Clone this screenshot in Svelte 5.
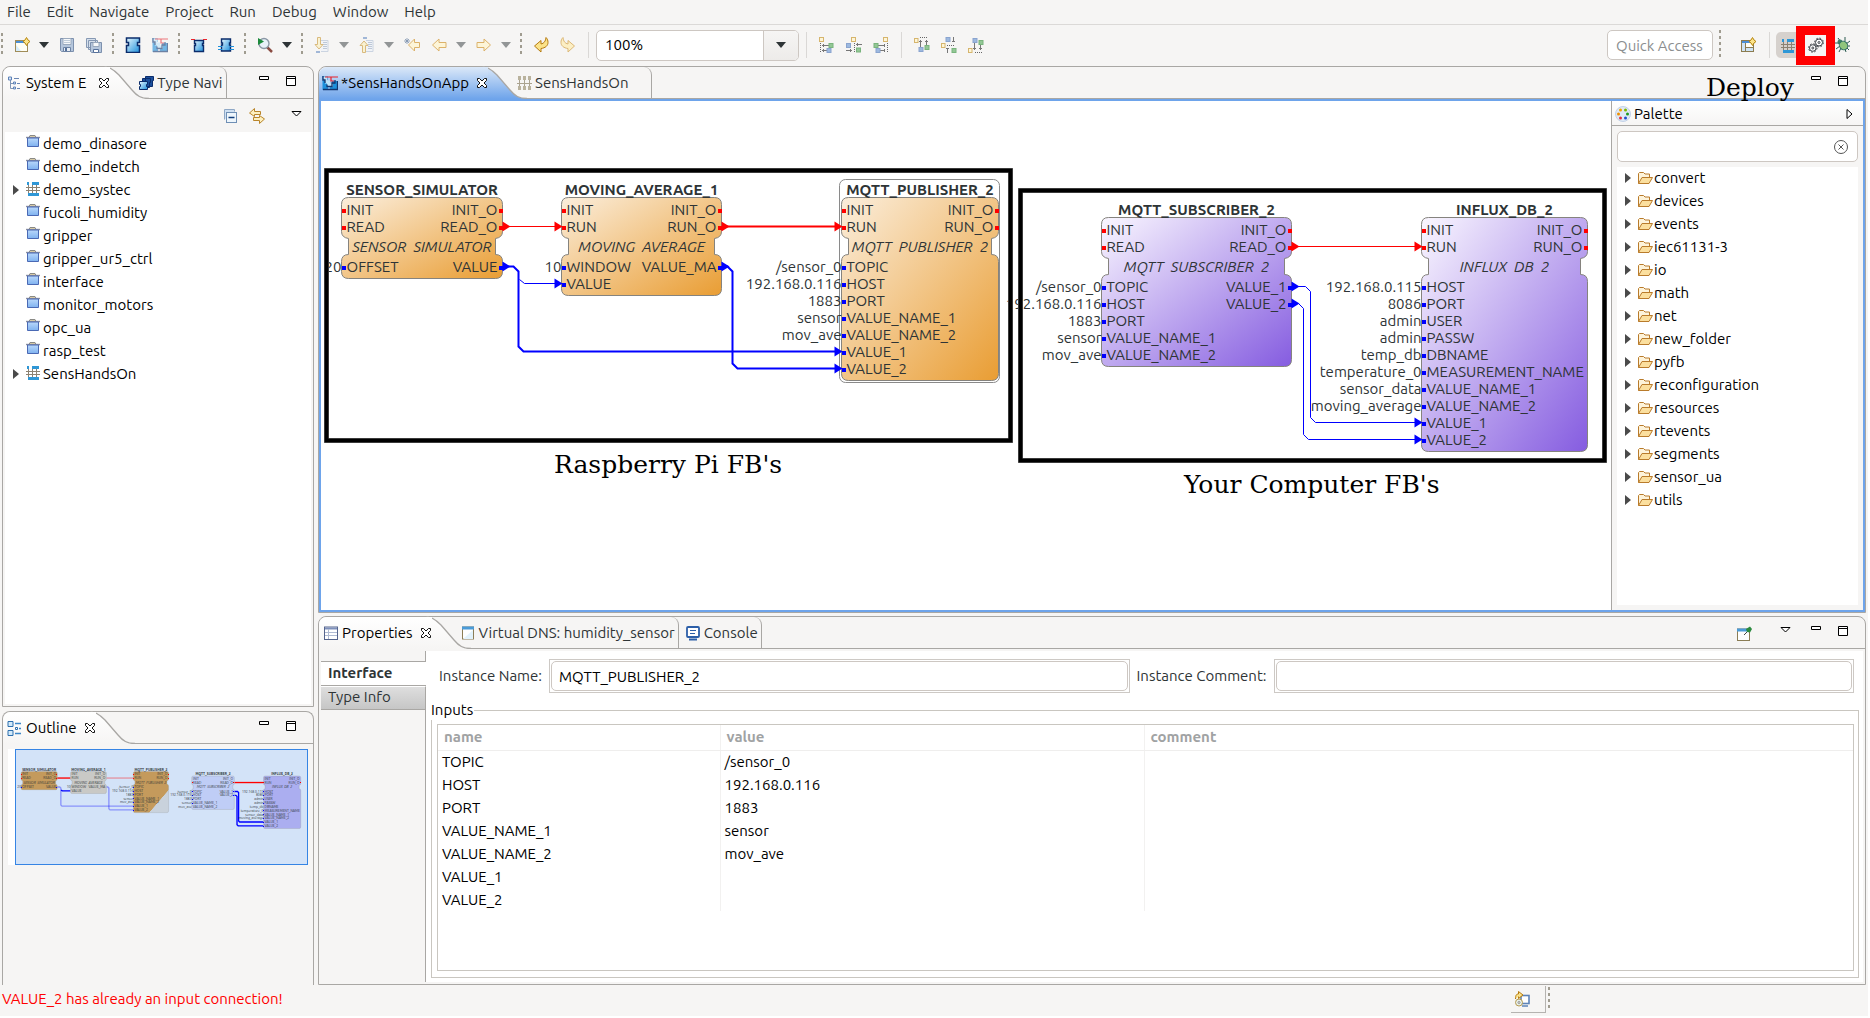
<script>
  const menus = ['File', 'Edit', 'Navigate', 'Project', 'Run', 'Debug', 'Window', 'Help'];

  const tools = [
    ['dots', 'lead'],
    ['new', 'New'], ['caret', 'New options'], ['save', 'Save'], ['saveall', 'Save All'],
    ['dots'],
    ['fb', 'Function Block'], ['fbn', 'Application'],
    ['dots'],
    ['fbred', 'Event interface'], ['fbblue', 'Data interface'],
    ['dots'],
    ['search', 'Search'], ['caret', 'Search options'],
    ['dots'],
    ['nextann', 'Next Annotation'], ['caretoff', 'Next options'],
    ['prevann', 'Previous Annotation'], ['caretoff', 'Previous options'],
    ['lastedit', 'Last Edit Location'], ['back', 'Back'], ['caretoff', 'Back options'],
    ['forward', 'Forward'], ['caretoff', 'Forward options'],
    ['dots'],
    ['undo', 'Undo'], ['redo', 'Redo'],
    ['sep']
  ];
  const aligns = [
    ['sep'], ['alignleft', 'Align Left'], ['aligncenter', 'Align Center'], ['alignright', 'Align Right'],
    ['sep'], ['aligntop', 'Align Top'], ['alignmiddle', 'Align Middle'], ['alignbottom', 'Align Bottom']
  ];

  const projects = [
    ['demo_dinasore', 'project'], ['demo_indetch', 'project'], ['demo_systec', 'system'],
    ['fucoli_humidity', 'project'], ['gripper', 'project'], ['gripper_ur5_ctrl', 'project'],
    ['interface', 'project'], ['monitor_motors', 'project'], ['opc_ua', 'project'],
    ['rasp_test', 'project'], ['SensHandsOn', 'system']
  ];

  const palette = ['convert', 'devices', 'events', 'iec61131-3', 'io', 'math', 'net', 'new_folder',
    'pyfb', 'reconfiguration', 'resources', 'rtevents', 'segments', 'sensor_ua', 'utils'];

  const inputs = [
    ['TOPIC', '/sensor_0'], ['HOST', '192.168.0.116'], ['PORT', '1883'],
    ['VALUE_NAME_1', 'sensor'], ['VALUE_NAME_2', 'mov_ave'], ['VALUE_1', ''], ['VALUE_2', '']
  ];

  // Function blocks, in canvas coordinates
  const blocks = [
    { name: 'SENSOR_SIMULATOR', type: ['SENSOR', 'SIMULATOR'], x: 20, y: 96, w: 161, h: 81, color: 'orange', mini: '#c49a5c',
      ein: ['INIT', 'READ'], eout: ['INIT_O', 'READ_O'], din: [['OFFSET', '20']], dout: ['VALUE'] },
    { name: 'MOVING_AVERAGE_1', type: ['MOVING', 'AVERAGE'], x: 240, y: 96, w: 160, h: 98, color: 'orange', mini: '#c9c9c6',
      ein: ['INIT', 'RUN'], eout: ['INIT_O', 'RUN_O'], din: [['WINDOW', '10'], ['VALUE', '']], dout: ['VALUE_MA'] },
    { name: 'MQTT_PUBLISHER_2', type: ['MQTT', 'PUBLISHER', '2'], x: 520, y: 96, w: 157, h: 183, color: 'orange', mini: 'url(#fill-split)', selected: true,
      ein: ['INIT', 'RUN'], eout: ['INIT_O', 'RUN_O'],
      din: [['TOPIC', '/sensor_0'], ['HOST', '192.168.0.116'], ['PORT', '1883'], ['VALUE_NAME_1', 'sensor'], ['VALUE_NAME_2', 'mov_ave'], ['VALUE_1', ''], ['VALUE_2', '']], dout: [] },
    { name: 'MQTT_SUBSCRIBER_2', type: ['MQTT', 'SUBSCRIBER', '2'], x: 780, y: 116, w: 190, h: 149, color: 'purple', mini: '#bfcdf6',
      ein: ['INIT', 'READ'], eout: ['INIT_O', 'READ_O'],
      din: [['TOPIC', '/sensor_0'], ['HOST', '192.168.0.116'], ['PORT', '1883'], ['VALUE_NAME_1', 'sensor'], ['VALUE_NAME_2', 'mov_ave']], dout: ['VALUE_1', 'VALUE_2'] },
    { name: 'INFLUX_DB_2', type: ['INFLUX', 'DB', '2'], x: 1100, y: 116, w: 166, h: 234, color: 'purple', mini: '#abaef0',
      ein: ['INIT', 'RUN'], eout: ['INIT_O', 'RUN_O'],
      din: [['HOST', '192.168.0.115'], ['PORT', '8086'], ['USER', 'admin'], ['PASSW', 'admin'], ['DBNAME', 'temp_db'], ['MEASUREMENT_NAME', 'temperature_0'], ['VALUE_NAME_1', 'sensor_data'], ['VALUE_NAME_2', 'moving_average'], ['VALUE_1', ''], ['VALUE_2', '']], dout: [] }
  ];

  const wires = [
    { d: 'M181 125H240', c: 'red', w: 1 },
    { d: 'M400 125H520', c: 'red', w: 2, soft: true },
    { d: 'M181 165H192L197 170V245L202 250H520', c: 'blue', w: 2, soft: true },
    { d: 'M198 178L203 182H240', c: 'blue', w: 1 },
    { d: 'M400 165H406L411 170V262L416 267H520', c: 'blue', w: 2, soft: true },
    { d: 'M970 145H1100', c: 'red', w: 1 },
    { d: 'M970 185H984L989 190V316L994 321H1100', c: 'blue', w: 1 },
    { d: 'M970 202H977L982 207V333L987 338H1100', c: 'blue', w: 1 }
  ];
  const arrows = [
    [181, 125, 'red'], [233, 125, 'red'], [400, 125, 'red'], [513, 125, 'red'],
    [181, 165, 'blue'], [233, 182, 'blue'], [400, 165, 'blue'], [513, 250, 'blue'], [513, 267, 'blue'],
    [970, 145, 'red'], [1093, 145, 'red'], [970, 185, 'blue'], [970, 202, 'blue'], [1093, 321, 'blue'], [1093, 338, 'blue']
  ];

  function outline({ x, y, w, h }) {
    const r = x + w, b = y + h, n = 7;
    return `M${x + n} ${y}H${r - n}Q${r} ${y} ${r} ${y + n}V${y + 34}Q${r} ${y + 40} ${r - n} ${y + 41}V${y + 57}Q${r} ${y + 57} ${r} ${y + 64}V${b - n}Q${r} ${b} ${r - n} ${b}H${x + n}Q${x} ${b} ${x} ${b - n}V${y + 64}Q${x} ${y + 57} ${x + n} ${y + 57}V${y + 41}Q${x} ${y + 40} ${x} ${y + 34}V${y + n}Q${x} ${y} ${x + n} ${y}Z`;
  }
</script>

{#snippet icon(name)}
  <svg class="icon" viewBox="0 0 16 16" width="16" height="16" aria-hidden="true">
    {#if name === 'new'}
      <rect x="1.500" y="3.500" width="12" height="11" fill="#fffef4" stroke="#a08c58" />
      <path d="M2 4h11v2H2z" fill="#4b8fd6" /><path d="M2 14V8l5 6z" fill="#d7edfb" />
      <path d="M12.500 .5L14 3l2 1.500L14 6l-1.500 2.500L11 6 9 4.500 11 3z" fill="#fbe38a" stroke="#b8860b" />
    {:else if name === 'save'}
      <path d="M1.500 1.500h13v13h-12l-1-1z" fill="#b5c6dc" stroke="#7d90ad" /><path d="M4 1.500h8v6H4z" fill="#f6f8fa" stroke="#9aa9bd" /><path d="M5 3.500h6M5 5.500h6" stroke="#c0ccd9" /><path d="M4.500 10.500h7v4h-7z" fill="#e8eef5" stroke="#6c82a3" /><path d="M6 11h2v3H6z" fill="#56719b" />
    {:else if name === 'saveall'}
      <path d="M.5 1.500h9v9h-9zM2.500 3.500h9v9h-9z" fill="#d5dfeb" stroke="#8698b3" /><path d="M4.500 5.500h11v10h-10l-1-1z" fill="#b5c6dc" stroke="#7d90ad" /><path d="M7 5.500h6v4H7z" fill="#f6f8fa" stroke="#9aa9bd" /><path d="M7.500 12.500h5v3h-5z" fill="#fff" stroke="#56719b" />
    {:else if name === 'fb'}
      <path d="M1.500 1h13v4.500h-2v3h2v7h-13v-7h2v-3h-2z" fill="url(#ic-cyan)" stroke="#0b2c6b" stroke-width="1.500" />
    {:else if name === 'fbn' || name === 'app'}
      <g opacity={name === 'fbn' ? 0.6 : 1}>
        <path d="M.5 1h5v4H4v2h2v8H.5zM10 6h5.500v9H8v-3h2z" fill="#1e90dc" />
        <path d="M1 1.500h4v4h3v3h3v3H5v-3H3v-3H1z" fill="#bfe3f8" />
        <path d="M1 1v4h2v3M1 14.500h14.500V6M5 9.500v2h5V8h3V5" fill="none" stroke="#12356f" stroke-width="1.300" />
        <path d="M3 2h6v4h3M7 2h9" fill="none" stroke="#e8232b" stroke-width="1.200" />
      </g>
    {:else if name === 'fbred'}
      <path d="M3.500 3.500h9v3h-1v2h1v6h-9v-6h1v-2h-1z" fill="url(#ic-cyan)" stroke="#0b2c6b" stroke-width="1.400" /><path d="M0 2.500h4M12 2.500h4" stroke="#e8232b" stroke-width="1.200" />
    {:else if name === 'fbblue'}
      <path d="M3.500 2h9v4h-1v2h1v6h-9V8h1V6h-1z" fill="url(#ic-cyan)" stroke="#0b2c6b" stroke-width="1.400" /><path d="M0 9.500h4M12 9.500h4M0 12.500h4M12 12.500h4" stroke="#1e90dc" stroke-width="1.200" />
    {:else if name === 'search'}
      <path d="M10 10l5 5" stroke="#8a4b42" stroke-width="2.500" /><circle cx="7" cy="6.500" r="5" fill="#e8f1f8" stroke="#8b98a5" stroke-width="1.400" /><path d="M1 1l6 3.500L1 8z" fill="#1c8a3c" />
    {:else if name === 'nextann' || name === 'prevann'}
      <g opacity=".55"><path d="M7 3.500h7v11H7" fill="#eef3fa" stroke="#a9bad2" /><path d="M9 5.500h4M9 7.500h4M9 9.500h4M9 11.500h4" stroke="#8fa4c2" />
        {#if name === 'nextann'}<path d="M3.500 .5h3v7h2.500L5 12 1 7.500h2.500z" fill="#fdf0b8" stroke="#c28a1e" /><path d="M2 14h4v2H2z" fill="#5c86c0" />
        {:else}<path d="M3.500 15.500h3v-7h2.500L5 4 1 8.500h2.500z" fill="#fdf0b8" stroke="#c28a1e" /><path d="M4 0h4v2H4z" fill="#5c86c0" />{/if}</g>
    {:else if name === 'lastedit'}
      <path d="M15.500 5.500v5h-5v3.500L4.500 8l6-6v3.500z" fill="#fdf5d8" stroke="#dcb26a" /><path d="M3 1v6M0 4h6M1 2l4 4M5 2L1 6" stroke="#7f93af" stroke-width=".8" />
    {:else if name === 'back'}
      <path d="M15 5.500v5H8v3.500L1.500 8 8 2v3.500z" fill="#fdf5d8" stroke="#dcb26a" />
    {:else if name === 'forward'}
      <path d="M1 5.500v5h7v3.500L14.500 8 8 2v3.500z" fill="#fdf5d8" stroke="#dcb26a" />
    {:else if name === 'undo'}
      <path d="M13 .5c1.500 1.500 2 3 2 5 0 3-2.500 5.500-7 6v3.500L1.500 9 8 3.500V7c3-.5 4.800-3 5-6.500z" fill="#fbe38a" stroke="#b57a10" />
    {:else if name === 'redo'}
      <path d="M3 .5C1.500 2 1 3.500 1 5.500c0 3 2.500 5.500 7 6v3.500L14.500 9 8 3.500V7C5 6.500 3.200 4 3 .5z" fill="#fcefc4" stroke="#dcb877" />
    {:else if name.startsWith('align')}
      {@const v = name === 'aligntop' || name === 'alignmiddle' || name === 'alignbottom'}
      {@const o = { alignleft: [1, 10, 8], aligncenter: [6, 11, 1], alignright: [11, 1, 3], aligntop: [1, 10, 8], alignmiddle: [6, 0, 11], alignbottom: [11, 1, 3] }[name]}
      {#if v}
        <path d="M{name === 'alignbottom' ? 7 : 6} {name === 'aligntop' ? 0.5 : name === 'alignmiddle' ? 8.5 : 15.5}h8" stroke="#666" stroke-dasharray="1 1" />
        {#if name === 'aligntop'}<path d="M6.500 3v7M12.500 3v6M5 4.500h3M11 4.500h3" stroke="#777" />
        {:else if name === 'alignmiddle'}<path d="M12.500 0v5M6.500 11v5M11 4.500h3M5 11.500h3" stroke="#777" />
        {:else}<path d="M6.500 6v7M12.500 7v6M5 11.500h3M11 11.500h3" stroke="#777" />{/if}
        <rect x=".5" y={o[0] + 0.5} width="3.500" height="4" fill="#fdf5d8" stroke="#d6b56d" /><rect x="5" y={o[1] + 0.5} width="4" height="4" fill="#9db9df" stroke="#8aa4cf" /><rect x="11" y={o[2] + 0.5} width="4" height="4" fill="#93c795" stroke="#79b47d" />
      {:else}
        <path d="M{name === 'alignleft' ? 1.5 : name === 'aligncenter' ? 8.5 : 14.5} 6v9" stroke="#666" stroke-dasharray="1 1" />
        {#if name === 'alignleft'}<path d="M3 8.500h7M3 13.500h5M4.500 7v3M4.500 12v3" stroke="#777" />
        {:else if name === 'aligncenter'}<path d="M10 7.500h6M0 13.500h6M11.500 6v3M4.500 12v3" stroke="#777" />
        {:else}<path d="M5 8.500h7M7 13.500h5M11.500 7v3M11.500 12v3" stroke="#777" />{/if}
        <rect x={o[0] - 0.5} y=".5" width="4" height="4" fill="#fdf5d8" stroke="#d6b56d" />
        {#if name === 'aligncenter'}
          <rect x=".5" y="6.500" width="4" height="4" fill="#9db9df" stroke="#8aa4cf" /><rect x="10.500" y="11" width="4" height="4" fill="#93c795" stroke="#79b47d" />
        {:else}
          <rect x={o[1]} y="6.500" width="4" height="4" fill="#93c795" stroke="#79b47d" /><rect x={o[2]} y="11.500" width="4" height="4" fill="#9db9df" stroke="#8aa4cf" />
        {/if}
      {/if}
    {:else if name === 'perspective'}
      <rect x="1.500" y="3.500" width="12" height="11" fill="#fffef4" stroke="#8c7c50" /><path d="M2 4h11v2H2z" fill="#4b8fd6" /><path d="M5.500 6v9M5.500 10.500h8" stroke="#8c7c50" /><path d="M2 6h3v8H2zM6 11h7v3H6z" fill="#cfe4f5" />
      <path d="M12.500 .5L14 3l2 1.500L14 6l-1.500 2.500L11 6 9 4.500 11 3z" fill="#fbe38a" stroke="#b8860b" />
    {:else if name === 'system'}
      <path d="M1 7.500h14M1 10.500h14M3.500 5v8M7.500 5v8M11.500 5v8" stroke="#8c8272" fill="none" />
      <path d="M2 2h2v3H2zM7 2h7v3H7zM3 13h11v3H3z" fill="#2f97d6" />
    {:else if name === 'systemtab'}
      <path d="M1 8.500h15M3.500 5v7M8.500 5v7M13.500 5v7" stroke="#aaa390" fill="none" />
      <path d="M2 1h3v4H2zM7 1h3v4H7zM12 1h3v4h-3zM2 11h3v4H2zM7 11h3v4H7zM12 11h3v4h-3z" fill="#b9b29d" />
    {:else if name === 'gears'}
      <g fill="#fff" stroke="#3d4247"><circle cx="11" cy="5.500" r="3.500" stroke-width="1" /><circle cx="11" cy="5.500" r="4.400" fill="none" stroke-width="1" stroke-dasharray="1.700 1.750" /><circle cx="11" cy="5.500" r="1" /><circle cx="4.800" cy="11" r="3.300" /><circle cx="4.800" cy="11" r="4.200" fill="none" stroke-dasharray="1.600 1.700" /><circle cx="4.800" cy="11" r="1" /></g>
    {:else if name === 'bug'}
      <path d="M3 1l3 4M10 0v4M0 6h5M15 4l-4 3M15 9h-4M1 12l4-3M4 15l2-4M11 15l-1-3M14 13l-3-3" stroke="#2c5b50" /><circle cx="5" cy="5" r="2.500" fill="#3f7f6b" /><ellipse cx="8.500" cy="8.500" rx="4" ry="4.500" fill="#8fc57c" stroke="#2f6f63" transform="rotate(-40 8.500 8.500)" />
    {:else if name === 'explorer'}
      <path d="M3.500 5v8.500h3M3.500 8.500h3" fill="none" stroke="#7f95b5" /><path d="M1.500 2h3v3h-3zM6.500 7h2v2h-2zM6.500 12h2v2h-2z" fill="#d7e6f8" stroke="#5f83b8" /><path d="M7 3.500h5M10 8.500h3M10 13.500h3" stroke="#6a86b3" />
    {:else if name === 'types'}
      <path d="M7.500 1.500h8v4h-1v6h-7zM4.500 3.500h8v4h-1v5h-7z" fill="#1b4f9c" stroke="#0b2c6b" /><path d="M1.500 6.500h8v3h-1v2h1v3h-8v-3h1v-2h-1z" fill="url(#ic-cyan)" stroke="#0b2c6b" />
    {:else if name === 'collapse'}
      <path d="M2.500 11.500v-10h10v2" fill="#cfe0f2" stroke="#8fa8c6" /><rect x="4.500" y="4.500" width="10" height="10" fill="#eef6fc" stroke="#6f8fb5" /><path d="M6.500 9.500h6" stroke="#123e7c" stroke-width="1.500" />
    {:else if name === 'link'}
      <path d="M11.500 3.500v3H5.500v2L.5 5l5-4.500v3zM4.500 9.500v3h6v3l5-4.500-5-3.500v2z" fill="#fdf0c0" stroke="#b9852a" />
    {:else if name === 'project'}
      <path d="M5 1.500h5l1 2H4z" fill="#ead9a8" stroke="#8a8a86" /><path d="M1 3.500h14" stroke="#8b8fa0" stroke-width="1.400" /><path d="M2.500 4h11v8.500h-11z" fill="url(#ic-proj)" stroke="#4a69b4" />
    {:else if name === 'folder'}
      <path d="M1.500 13.500v-10l1-1h4l1.500 1.500h4.500v3" fill="#fdf3da" stroke="#b97b2b" /><path d="M1.500 13.500l3.500-6h10.500l-3.500 6z" fill="#fbdf9e" stroke="#b97b2b" />
    {:else if name === 'palette'}
      <circle cx="8" cy="8" r="7.500" fill="#dfe9f6" stroke="#c3d2e8" /><g><circle cx="5.500" cy="4" r="1.500" fill="#f0a400" /><circle cx="10.500" cy="4" r="1.500" fill="#7fb800" /><circle cx="3.500" cy="8" r="1.500" fill="#f09000" /><circle cx="12.500" cy="8" r="1.500" fill="#1f9a1f" /><circle cx="5.500" cy="12" r="1.500" fill="#e03040" /><circle cx="10.500" cy="12" r="1.500" fill="#2050d0" /></g>
    {:else if name === 'outline'}
      <path d="M1 1.500h5v5H1zM1 10.500h5v5H1z" fill="#d3eafa" stroke="#2d6fae" /><path d="M8.500 7.500h2v2h-2z" fill="#fff" stroke="#2d6fae" /><path d="M8 3.500h6M12 8.500h2M8 13.500h6" stroke="#3d87c8" stroke-width="1.300" />
    {:else if name === 'properties'}
      <rect x="1.500" y="2" width="13" height="12.500" fill="#fff" stroke="#55648c" /><path d="M2 2.500h12v2H2z" fill="#7e90bb" /><path d="M5.500 4v10M2 7.500h12M2 10.500h12" stroke="#b0bbd3" />
    {:else if name === 'window'}
      <rect x="2.500" y="2" width="11" height="12" fill="#fdfefe" stroke="#8b7d55" /><path d="M2 1.500h12v3H2z" fill="#4a9bd8" /><path d="M3 14L13 5v9z" fill="#e2f2fb" />
    {:else if name === 'console'}
      <rect x="2" y="2" width="12" height="10" rx="1" fill="#fff" stroke="#2d5fa8" stroke-width="1.800" /><path d="M5 5.500h6M5 8.500h5" stroke="#2d5fa8" /><path d="M4 14.500h8" stroke="#2d5fa8" stroke-width="2" />
    {:else if name === 'pin'}
      <rect x="1.500" y="3" width="12" height="11.500" fill="#fdfefe" stroke="#8b7d55" /><path d="M1 2.500h10v3H1z" fill="#4a9bd8" /><path d="M8 9l4-4" stroke="#444" /><path d="M10 3l4-2.500L16 3l-2 3.500-3-.5z" fill="#2b8a3e" />
    {:else if name === 'updates'}
      <rect x="7" y="4.500" width="8" height="8" fill="#fff" stroke="#5d83b8" stroke-width="1.600" /><path d="M8 15h6" stroke="#5d83b8" stroke-width="1.500" /><circle cx="5" cy="11.500" r="3.500" fill="#e6eee8" stroke="#b59a50" /><circle cx="5" cy="11.500" r="1" fill="#fff" stroke="#888" /><path d="M1.500 8c0-4 1-5 3-5V.5L9 4 4.500 7.500V5.500" fill="#fbe38a" stroke="#b57a10" />
    {/if}
  </svg>
{/snippet}

{#snippet close()}
  <button class="close" aria-label="Close"><svg class="icon" viewBox="0 0 12 12" width="12" height="12"><path d="M1.500 1.500h2L6 4l2.500-2.500h2v2L8 6l2.500 2.500v2h-2L6 8l-2.500 2.500h-2v-2L4 6 1.500 3.500z" fill="#fff" stroke="#111" /></svg></button>
{/snippet}

{#snippet winbuttons(menu)}
  <div class="winbtns">
    {#if menu}
      <button class="pin" aria-label="Pin">{@render icon('pin')}</button>
      <button class="viewmenu" aria-label="View Menu"><svg viewBox="0 0 11 11" width="11" height="11"><path d="M1 1.500h9L5.500 6z" fill="#fff" stroke="#000" /></svg></button>
    {/if}
    <button aria-label="Minimize"><svg viewBox="0 0 11 11" width="11" height="11"><path d="M.5 .5h9v3h-9z" fill="#fff" stroke="#000" /></svg></button>
    <button aria-label="Maximize"><svg viewBox="0 0 11 11" width="11" height="11"><path d="M.5 .5h9v9h-9zM.5 2.500h9" fill="#fff" stroke="#000" /></svg></button>
  </div>
{/snippet}

{#snippet curve(fill)}
  <svg class="curve" viewBox="0 0 48 33" width="48" height="33" aria-hidden="true">
    <path d="M0 0C8 .5 12 3 18 9L31 24C36 30 40 32.500 48 32.500V33H0Z" fill="url(#{fill})" />
    <path d="M0 .5C8 .5 12 3 18 9L31 24C36 30 40 32.500 48 32.500" fill="none" stroke="#a9a7a4" stroke-width="1.300" />
  </svg>
{/snippet}

{#snippet toolitem(name, label)}
  {#if name === 'dots'}
    <span class="dots" class:lead={label === 'lead'}></span>
  {:else if name === 'sep'}
    <span class="sep"></span>
  {:else if name.startsWith('caret')}
    <button class="caret" class:off={name === 'caretoff'} aria-label={label}><svg viewBox="0 0 10 6" width="10" height="6"><path d="M0 0h10L5 6z" fill="currentColor" /></svg></button>
  {:else}
    <button class="tool" aria-label={label}>{@render icon(name)}</button>
  {/if}
{/snippet}

{#snippet port(x, y, color)}
  <rect {x} y={y - 2} width="4" height="4" fill={color} shape-rendering="crispEdges" />
{/snippet}

{#snippet diagram(mini)}
  {#each wires as wire}
    <path d={wire.d} fill="none" stroke={wire.c} stroke-width={mini ? 6 : wire.w} opacity={mini && wire.soft ? 0.35 : 1} />
  {/each}
  {#each blocks as b}
    {#if b.selected && !mini}
      <rect x={b.x - 2} y={b.y - 18} width={b.w + 3} height={b.h + 20} rx="6" fill="#fff" stroke="#8a8a8a" />
    {/if}
    <path d={outline(b)} fill={mini ? b.mini : `url(#fill-${b.color})`} stroke="#85837e" />
    <text class="title" x={b.x + b.w / 2} y={b.y - 3} text-anchor="middle">{b.name}</text>
    <text class="type" x={b.x + b.w / 2} y={b.y + 54} text-anchor="middle">{b.type.join('\u00a0\u00a0')}</text>
    {#each b.ein as p, i}
      {@render port(b.x, b.y + 13 + i * 17, '#f00')}
      <text x={b.x + 5} y={b.y + 17 + i * 17}>{p}</text>
    {/each}
    {#each b.eout as p, i}
      {@render port(b.x + b.w - 4, b.y + 13 + i * 17, '#f00')}
      <text x={b.x + b.w - 5} y={b.y + 17 + i * 17} text-anchor="end">{p}</text>
    {/each}
    {#each b.din as p, i}
      {@render port(b.x, b.y + 70 + i * 17, '#00f')}
      <text x={b.x + 5} y={b.y + 74 + i * 17}>{p[0]}</text>
      <text x={b.x} y={b.y + 74 + i * 17} text-anchor="end">{p[1]}</text>
    {/each}
    {#each b.dout as p, i}
      {@render port(b.x + b.w - 4, b.y + 70 + i * 17, '#00f')}
      <text x={b.x + b.w - 5} y={b.y + 74 + i * 17} text-anchor="end">{p}</text>
    {/each}
  {/each}
  {#if !mini}
    {#each arrows as [x, y, c]}
      <path d="M{x} {y - 5}L{x + 8} {y}L{x} {y + 5}Z" fill={c} />
    {/each}
  {/if}
{/snippet}

<svg class="defs" width="0" height="0" aria-hidden="true">
  <defs>
    <linearGradient id="ic-cyan" x1="0" y1="0" x2="1" y2="1"><stop offset="0" stop-color="#e6f6fd" /><stop offset="1" stop-color="#1e90dc" /></linearGradient>
    <linearGradient id="ic-proj" x1="0" y1="0" x2="0" y2="1"><stop offset="0" stop-color="#b9d8fb" /><stop offset="1" stop-color="#7fb2f0" /></linearGradient>
    <linearGradient id="tab-plain" x1="0" y1="0" x2="0" y2="1"><stop offset="0" stop-color="#fff" /><stop offset="1" stop-color="#f6f5f4" /></linearGradient>
    <linearGradient id="tab-blue" x1="0" y1="0" x2="0" y2="1"><stop offset="0" stop-color="#dbe8f8" /><stop offset="1" stop-color="#6ea4eb" /></linearGradient>
    <linearGradient id="fill-orange" x1="0" y1="0" x2="1" y2="1"><stop offset="0" stop-color="#fbeedc" /><stop offset="1" stop-color="#e99d33" /></linearGradient>
    <linearGradient id="fill-purple" x1="0" y1="0" x2="1" y2="1"><stop offset="0" stop-color="#faf7ff" /><stop offset="1" stop-color="#855ce0" /></linearGradient>
    <linearGradient id="fill-split" x1="0" y1="0" x2="1" y2="1"><stop offset=".72" stop-color="#c49a5c" /><stop offset=".73" stop-color="#c9d2dc" /></linearGradient>
  </defs>
</svg>

<div class="ide">
  <nav class="menubar" aria-label="Main menu">
    {#each menus as m}<button>{m}</button>{/each}
  </nav>

  <div class="toolbar">
    {#each tools as [name, label]}{@render toolitem(name, label)}{/each}
    <div class="combo">
      <input value="100%" aria-label="Zoom" />
      <button aria-label="Zoom levels"><svg viewBox="0 0 10 6" width="10" height="6"><path d="M0 0h10L5 6z" fill="#2e3436" /></svg></button>
    </div>
    {#each aligns as [name, label]}{@render toolitem(name, label)}{/each}
    <div class="perspectives">
      <input class="quick" placeholder="Quick Access" aria-label="Quick Access" />
      <span class="dots wide"></span>
      <button class="tool open" aria-label="Open Perspective">{@render icon('perspective')}</button>
      <span class="sep"></span>
      <button class="current" aria-label="System">{@render icon('system')}</button>
      <button class="deploy" aria-label="Deploy">{@render icon('gears')}</button>
      <button class="bug" aria-label="Debug">{@render icon('bug')}</button>
    </div>
  </div>

  <main>
    <div class="left">
      <section class="panel tree-panel">
        <header>
          <div class="tab active">{@render icon('explorer')}<span>System E</span>{@render close()}</div>
          {@render curve('tab-plain')}
          <div class="tab second">{@render icon('types')}<span>Type Navi</span></div>
          {@render winbuttons(false)}
        </header>
        <div class="treebar">
          <button aria-label="Collapse All">{@render icon('collapse')}</button>
          <button aria-label="Link with Editor">{@render icon('link')}</button>
          <button class="view" aria-label="View Menu"><svg viewBox="0 0 11 11" width="11" height="11"><path d="M1 1.500h9L5.500 6z" fill="#fff" stroke="#000" /></svg></button>
        </div>
        <ul class="tree">
          {#each projects as [name, kind]}
            <li>
              <span class="twist">{#if kind === 'system'}<svg viewBox="0 0 6 10" width="6" height="10"><path d="M0 0l6 5-6 5z" fill="#4a4a4a" /></svg>{/if}</span>
              {@render icon(kind)}<span>{name}</span>
            </li>
          {/each}
        </ul>
      </section>

      <section class="panel outline-panel">
        <header>
          <div class="tab active">{@render icon('outline')}<span>Outline</span>{@render close()}</div>
          {@render curve('tab-plain')}
          {@render winbuttons(false)}
        </header>
        <div class="thumb">
          <svg viewBox="0 0 1291 508" aria-label="Diagram overview">{@render diagram(true)}</svg>
        </div>
      </section>
    </div>

    <div class="right">
      <section class="panel editor">
        <header>
          <div class="tab active blue">{@render icon('app')}<span>*SensHandsOnApp</span>{@render close()}</div>
          {@render curve('tab-blue')}
          <div class="tab second">{@render icon('systemtab')}<span>SensHandsOn</span></div>
          {@render winbuttons(false)}
          <span class="note">Deploy</span>
        </header>
        <div class="editor-body">
          <svg class="canvas" aria-label="Function block network">
            <g transform="translate(.5 .5)">
              {@render diagram(false)}
              <g fill="none">
                <rect x="5" y="69" width="684" height="270" stroke="#777" stroke-width="5" /><rect x="5" y="69" width="684" height="270" stroke="#000" stroke-width="4" />
                <rect x="699" y="89" width="584" height="270" stroke="#777" stroke-width="5" /><rect x="699" y="89" width="584" height="270" stroke="#000" stroke-width="4" />
              </g>
            </g>
            <text class="caption" x="233" y="372">Raspberry Pi FB's</text>
            <text class="caption" x="863" y="392">Your Computer FB's</text>
          </svg>
          <aside>
            <div class="palette-head">{@render icon('palette')}<span>Palette</span>
              <button aria-label="Collapse palette"><svg viewBox="0 0 7 12" width="7" height="12"><path d="M1 1.500v9L6 6z" fill="#fff" stroke="#000" /></svg></button>
            </div>
            <div class="search">
              <input aria-label="Search palette" />
              <button aria-label="Clear"><svg viewBox="0 0 16 16" width="16" height="16"><circle cx="8" cy="8" r="6.500" fill="none" stroke="#555" /><path d="M5.500 5.500l5 5M10.500 5.500l-5 5" stroke="#555" /></svg></button>
            </div>
            <ul>
              {#each palette as name}
                <li><svg class="twist" viewBox="0 0 6 10" width="6" height="10"><path d="M0 0l6 5-6 5z" fill="#4a4a4a" /></svg>{@render icon('folder')}<span>{name}</span></li>
              {/each}
            </ul>
          </aside>
        </div>
      </section>

      <section class="panel props">
        <header>
          <div class="tab active">{@render icon('properties')}<span>Properties</span>{@render close()}</div>
          {@render curve('tab-plain')}
          <div class="tab second">{@render icon('window')}<span>Virtual DNS: humidity_sensor</span></div>
          <div class="tab third">{@render icon('console')}<span>Console</span></div>
          {@render winbuttons(true)}
        </header>
        <div class="props-body">
          <div class="side">
            <button class="on">Interface</button>
            <button class="off">Type Info</button>
            <div class="rest"></div>
          </div>
          <div class="form">
            <div class="fields">
              <label for="iname">Instance Name:</label>
              <div class="field"><input id="iname" value="MQTT_PUBLISHER_2" /></div>
              <label for="icomment">Instance Comment:</label>
              <div class="field"><input id="icomment" /></div>
            </div>
            <fieldset>
              <legend>Inputs</legend>
              <div class="tablebox">
                <table>
                  <thead><tr><th class="c1">name</th><th class="c2">value</th><th>comment</th></tr></thead>
                  <tbody>
                    {#each inputs as [name, value]}<tr><td>{name}</td><td>{value}</td><td></td></tr>{/each}
                  </tbody>
                </table>
              </div>
            </fieldset>
          </div>
        </div>
      </section>
    </div>
  </main>

  <footer>
    <span class="error">VALUE_2 has already an input connection!</span>
    <button class="updates" aria-label="Updates">{@render icon('updates')}</button>
    <span class="dots"></span>
  </footer>
</div>

<style>
  :global(body) { background: #f6f5f4; }
  .ide, .ide * { box-sizing: border-box; }
  .ide {
    display: flex; flex-direction: column; min-height: 100vh;
    background: #f6f5f4; border: solid #fff; border-width: 0 2px 2px 0;
    font: 15px/20px "Ubuntu", "Noto Sans", "Open Sans", sans-serif; color: #000;
  }
  .defs { position: absolute; }
  button { border: 0; padding: 0; margin: 0; background: none; font: inherit; color: inherit; display: flex; align-items: center; justify-content: center; flex: none; }
  input { font: inherit; color: inherit; min-width: 0; margin: 0; outline: 0; }
  ul { list-style: none; margin: 0; padding: 0; }
  svg { display: block; flex: none; }

  .menubar { display: flex; gap: 16px; height: 25px; padding: 0 7px; border-bottom: 1px solid #dbd9d7; color: #2e3436; }

  .toolbar { display: flex; align-items: center; height: 41px; padding-bottom: 1px; }
  .tool { width: 27px; height: 28px; }
  .caret { width: 18px; height: 28px; color: #2e3436; }
  .caret.off { color: #929596; }
  .dots { flex: none; width: 12px; height: 24px; background: repeating-linear-gradient(#a09c90 0 3px, transparent 3px 6px) center / 2px 100% no-repeat; }
  .dots.lead { width: 8px; background-position: 1px 0; }
  .dots.wide { width: 14px; height: 30px; }
  .sep { flex: none; width: 14px; height: 26px; background: linear-gradient(#dad8d6, #dad8d6) center / 1px 100% no-repeat; }
  .combo { display: flex; width: 203px; height: 31px; border: 1px solid #cdc7c2; border-radius: 5px; background: #fff; overflow: hidden; margin-left: 1px; }
  .combo input { flex: 1; border: 0; padding: 0 8px; background: none; }
  .combo button { width: 35px; border-left: 1px solid #cdc7c2; background: linear-gradient(#f6f5f4, #edebe9); }
  .perspectives { margin-left: auto; display: flex; align-items: center; padding-right: 17px; }
  .quick { width: 106px; height: 30px; border: 1px solid #cdc7c2; border-radius: 5px; padding: 0 8px; background: #fff; }
  .quick::placeholder { color: #8b8e8f; opacity: 1; }
  .open { margin-left: 7px; margin-right: 1px; }
  .current { width: 20px; height: 26px; padding-left: 4px; background: #d6d1cd; border-radius: 5px 0 0 5px; }
  .deploy { width: 39px; height: 39px; border: 9px solid #f00; }
  .bug { width: 16px; height: 26px; }

  main { flex: 1; display: flex; gap: 4px; padding: 0 2px; }
  .left { width: 312px; flex: none; display: flex; flex-direction: column; gap: 4px; }
  .right { flex: 1; min-width: 0; display: flex; flex-direction: column; gap: 3px; }
  .panel { border: 1px solid #a9a7a4; border-radius: 8px 8px 0 0; display: flex; flex-direction: column; }
  .panel > header { position: relative; display: flex; height: 32px; flex: none; border-bottom: 1px solid #a9a7a4; }
  .tab { display: flex; align-items: center; height: 32px; white-space: nowrap; color: #2e3436; }
  .tab .icon { margin-right: 3px; }
  .tab.active { position: relative; z-index: 1; color: #000; padding-left: 4px; background: linear-gradient(#fff, #f6f5f4); border-radius: 8px 0 0 0; }
  .tab.blue { background: linear-gradient(#dbe8f8, #6ea4eb); padding-left: 3px; }
  .close { margin-left: 7px; position: relative; z-index: 2; width: 12px; }
  .tree-panel .close { margin-left: 12px; }
  .tab .close .icon { margin: 0; }
  .panel :global(.curve) { margin: -1px 0 0 -9px; position: relative; }
  .tab.second { position: relative; margin-left: -11px; padding-right: 3px; border-right: 1px solid #a9a7a4; border-radius: 0 8px 0 0; height: 31px; }
  .tab.third { padding: 0 3px 0 6px; border-right: 1px solid #a9a7a4; border-radius: 0 8px 0 0; height: 31px; }
  .winbtns { margin-left: auto; display: flex; align-items: flex-start; gap: 16px; padding: 9px 16px 0 0; }
  .pin { margin-right: 12px; }
  .viewmenu { margin-right: 4px; }

  .tree-panel { flex: 1; }
  .treebar { display: flex; justify-content: flex-end; align-items: center; height: 33px; gap: 11px; padding-right: 11px; }
  .treebar .view { margin-left: 15px; }
  .tree { flex: 1; background: #fff; margin: 0 2px 2px; }
  .tree li { display: flex; align-items: center; height: 23px; gap: 2px; padding-left: 8px; }
  .tree li .icon { margin-bottom: 4px; }
  .tree .twist { width: 10px; }
  .outline-panel { flex: 0 0 274px; border-bottom: 0; }
  .thumb { margin: 5px 5px 0; padding-left: 7px; background: #fff; }
  .thumb svg { width: 100%; height: 116px; border: 1px solid #3584e4; background: #d3e3f8; }

  .editor { flex: 1; }
  .editor > header { z-index: 1; }
  .editor .tab.second { padding-right: 23px; }
  .editor-body { flex: 1; display: flex; border: 2px solid #6ea4eb; background: #fff; min-height: 0; }
  .canvas { flex: 1; min-width: 0; height: auto; overflow: hidden; align-self: stretch; }
  .note { position: absolute; right: 71px; top: 6px; font: 25px/30px "DejaVu Serif", serif; }
  text { font: 15px "Ubuntu", "Noto Sans", "Open Sans", sans-serif; fill: #2e3436; }
  .title { font-weight: bold; }
  .type { font-style: italic; }
  .caption { font: 25px "DejaVu Serif", serif; fill: #000; }

  aside { width: 252px; flex: none; border-left: 1px solid #a9a7a4; background: #f6f5f4; display: flex; flex-direction: column; }
  .palette-head { display: flex; align-items: center; height: 25px; gap: 3px; padding: 1px 10px 0 3px; border-bottom: 1px solid #a9a7a4; background: linear-gradient(#fff, #f6f5f4); }
  .palette-head button { margin-left: auto; }
  .search { display: flex; align-items: center; height: 31px; margin: 5px; padding-right: 8px; background: #fff; border: 1px solid #cdc7c2; border-radius: 5px; }
  .search input { flex: 1; border: 0; background: none; }
  aside ul { flex: 1; background: #fff; margin: 0 5px 5px; }
  aside li { display: flex; align-items: center; height: 23px; padding: 0 0 1px 8px; }
  aside li .icon { margin: 0 1px 0 0; }
  aside li .twist { margin-right: 6px; }

  .props { flex: 0 0 369px; }
  .props-body { flex: 1; display: flex; padding: 2px; background: #f6f5f4; }
  .side { width: 105px; flex: none; display: flex; flex-direction: column; }
  .side::before { content: ""; height: 10px; border-right: 1px solid #a9a7a4; }
  .side button { justify-content: flex-start; padding: 0 0 2px 7px; color: #2e3436; }
  .side .on { height: 25px; background: #fff; border: solid #a9a7a4; border-width: 1px 0; font-weight: bold; }
  .side .off { height: 24px; background: linear-gradient(#dedede, #c6c6c6); border-right: 1px solid #a9a7a4; border-top: 1px solid #fff; border-bottom: 1px solid #a9a7a4; }
  .rest { flex: 1; border-right: 1px solid #a9a7a4; }
  .form { flex: 1; min-width: 0; background: #fff; padding: 8px 4px 4px 5px; display: flex; flex-direction: column; }
  .fields { display: flex; align-items: center; gap: 7px; padding: 0 5px 0 8px; color: #2e3436; }
  .field { flex: 1; padding: 1px; border: 1px solid #cdc9c5; }
  .field input { width: 100%; height: 30px; display: block; border: 1px solid #cdc7c2; border-radius: 5px; padding: 0 7px; color: #000; }
  fieldset { flex: 1; display: flex; margin: 7px 0 0; border: 1px solid #c9c6c0; padding: 4px 4px 6px 5px; min-width: 0; }
  legend { padding: 0 1px 0 0; margin-left: -6px; }
  .tablebox { flex: 1; border: 1px solid #c9c6c0; }
  table { width: 100%; border-collapse: collapse; table-layout: fixed; }
  th { text-align: left; color: #a0a2a3; font-weight: bold; height: 25px; padding: 0 6px; border-bottom: 1px solid #efeeed; }
  td { height: 23px; padding: 0 4px; white-space: nowrap; }
  th + th, td + td { border-left: 1px solid #f2f1f0; }
  .c1 { width: 282px; }
  .c2 { width: 424px; }

  footer { display: flex; align-items: center; height: 31px; padding: 0 0 3px 2px; }
  .error { color: #f00; }
  .updates { margin-left: auto; width: 35px; height: 27px; border: solid #b5b3b0; border-width: 0 1px 1px 0; padding-right: 12px; }
  footer .dots { margin-right: 316px; width: 6px; }
</style>
